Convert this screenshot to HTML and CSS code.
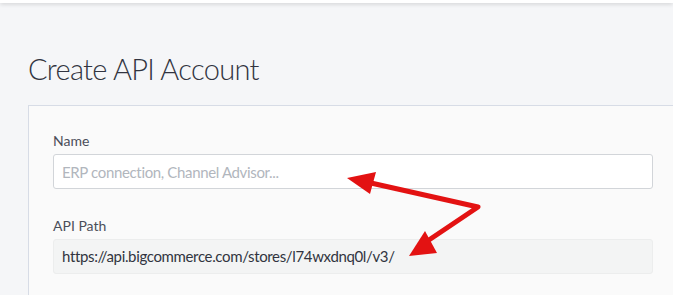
FILE: index.html
```html
<!DOCTYPE html>
<html lang="en">
<head>
    <meta charset="UTF-8">
    <title>Create API Account</title>
    <link rel="stylesheet" href="styles.css">
</head>
<body>
    <!-- top bar -->
    <div class="topbar"></div>

    <div class="page">
        <h1 class="page-title">Create API Account</h1>

        <!-- form panel -->
        <div class="panel">
            <div class="field">
                <label class="field-label" for="name">Name</label>
                <input id="name" class="field-input" type="text" placeholder="ERP connection, Channel Advisor...">
            </div>
            <div class="field">
                <span class="field-label">API Path</span>
                <div class="field-readonly">https://api.bigcommerce.com/stores/l74wxdnq0l/v3/</div>
            </div>
        </div>
    </div>

    <!-- red arrows annotation -->
    <svg class="arrows" width="673" height="295" viewBox="0 0 673 295">
        <g fill="none" stroke="#e31212" stroke-width="5" stroke-linejoin="round" stroke-linecap="round">
            <polyline points="362,181 478,207 420,246"/>
        </g>
        <g fill="#e31212">
            <polygon points="347,178 376,172 370,194"/>
            <polygon points="409,256 425,231 437,253"/>
        </g>
    </svg>
</body>
</html>
```

FILE: styles.css
```css
body, html {
    margin: 0;
    padding: 0;
    height: 100%;
    overflow: hidden;
    background: #f5f6f8;
    font-family: 'Lato', 'Liberation Sans', sans-serif;
    color: #313440;
}

/* top bar */
.topbar {
    height: 3px;
    background: #ffffff;
    box-shadow: 0 1px 4px rgba(0, 0, 0, 0.18);
}

.page {
    padding-left: 28px;
}

.page-title {
    margin: 0;
    padding-top: 46px;
    font-size: 29px;
    font-weight: 300;
    line-height: 40px;
    letter-spacing: -0.7px;
    color: #313440;
}

/* form panel */
.panel {
    margin-top: 16px;
    width: 620px;
    padding: 25px 24px 1px;
    background: #fafafa;
    border: 1px solid #d7dce6;
    border-right: none;
}

.field {
    width: 600px;
    margin-bottom: 27px;
}

.field-label {
    display: block;
    font-size: 14px;
    line-height: 20px;
    color: #4a4e59;
    margin-bottom: 3px;
}

.field-input {
    box-sizing: border-box;
    width: 100%;
    height: 35px;
    padding: 0 8px;
    font-family: inherit;
    font-size: 15px;
    letter-spacing: -0.35px;
    color: #313440;
    background: #ffffff;
    border: 1px solid #d2d5d9;
    border-radius: 3px;
    outline: none;
}

.field-input::placeholder {
    color: #b1b6bd;
}

.field-readonly {
    box-sizing: border-box;
    height: 35px;
    padding: 0 8px;
    font-size: 15px;
    line-height: 33px;
    letter-spacing: -0.35px;
    color: #313440;
    background: #f3f4f4;
    border: 1px solid #eceded;
    border-radius: 3px;
}

/* annotation overlay */
.arrows {
    position: absolute;
    top: 0;
    left: 0;
}
```
